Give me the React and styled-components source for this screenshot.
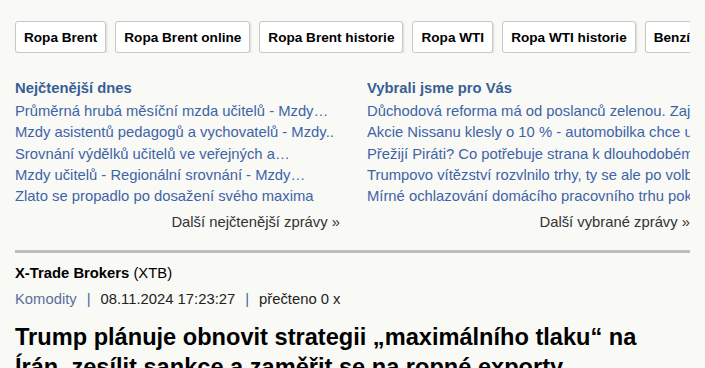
import React from "react";
import styled, { createGlobalStyle } from "styled-components";

const Global = createGlobalStyle`
  html, body { margin: 0; padding: 0; background: #f9f9f6; }
  body { font-family: "Liberation Sans", Arial, sans-serif; overflow: hidden; }
`;

const Page = styled.div`
  width: 675px;
  padding: 0 15px;
  overflow: hidden;
`;

const Toolbar = styled.div`
  display: flex;
  gap: 9px;
  padding-top: 21px;
  white-space: nowrap;
  overflow: hidden;
`;

const TagButton = styled.a`
  flex: none;
  display: flex;
  align-items: center;
  height: 30px;
  padding: 0 8px;
  background: #fff;
  border: 1px solid #c8c8c8;
  border-radius: 3px;
  box-shadow: 1px 1px 2px rgba(0,0,0,0.12);
  font-size: 13.6px;
  font-weight: bold;
  color: #000;
  text-decoration: none;
`;

const Columns = styled.div`
  display: grid;
  grid-template-columns: 325px 323px;
  column-gap: 27px;
  margin-top: 26px;
`;

const Column = styled.div`
  display: flex;
  flex-direction: column;
  overflow: hidden;
  min-width: 0;
`;

const Heading = styled.div`
  font-size: 14.8px;
  font-weight: bold;
  color: #385f94;
  line-height: 18px;
  margin-bottom: 4px;
`;

const NewsLink = styled.a`
  font-size: 14.8px;
  line-height: 21.3px;
  color: #3e64a6;
  text-decoration: none;
  white-space: nowrap;
  overflow: hidden;
`;

const More = styled.a`
  align-self: flex-end;
  font-size: 14.8px;
  line-height: 20px;
  color: #333;
  text-decoration: none;
  margin-top: 5px;
  white-space: nowrap;
`;

const Divider = styled.hr`
  border: 0;
  height: 3px;
  background: #bdbdbd;
  margin: 18px 0 0;
`;

const Source = styled.div`
  margin-top: 11px;
  font-size: 14.8px;
  line-height: 18px;
  color: #000;
  b { font-weight: bold; }
`;

const Meta = styled.div`
  margin-top: 8px;
  font-size: 14.8px;
  line-height: 18px;
  color: #222;
  display: flex;
  gap: 10px;
  white-space: nowrap;
`;

const MetaLink = styled.a`
  color: #5a6e9c;
  text-decoration: none;
`;

const Sep = styled.span`
  color: #3e64a6;
`;

const Title = styled.h1`
  margin: 14px 0 0;
  font-size: 23.6px;
  line-height: 30px;
  font-weight: bold;
  color: #000;
`;

const tags = ["Ropa Brent", "Ropa Brent online", "Ropa Brent historie", "Ropa WTI", "Ropa WTI historie", "Benzín", "Nafta"];

const mostRead = [
  "Průměrná hrubá měsíční mzda učitelů - Mzdy…",
  "Mzdy asistentů pedagogů a vychovatelů - Mzdy..",
  "Srovnání výdělků učitelů ve veřejných a…",
  "Mzdy učitelů - Regionální srovnání - Mzdy…",
  "Zlato se propadlo po dosažení svého maxima",
];

const picked = [
  "Důchodová reforma má od poslanců zelenou. Zajímá vás, co se změní?",
  "Akcie Nissanu klesly o 10 % - automobilka chce ušetřit",
  "Přežijí Piráti? Co potřebuje strana k dlouhodobému přežití",
  "Trumpovo vítězství rozvlnilo trhy, ty se ale po volbách uklidnily",
  "Mírné ochlazování domácího pracovního trhu pokračuje",
];

export default function App() {
  return (
    <>
      <Global />
      <Page>
        <Toolbar>
          {tags.map((t) => (
            <TagButton key={t} href="#">{t}</TagButton>
          ))}
        </Toolbar>
        <Columns>
          <Column>
            <Heading>Nejčtenější dnes</Heading>
            {mostRead.map((t) => <NewsLink key={t} href="#">{t}</NewsLink>)}
            <More href="#">Další nejčtenější zprávy »</More>
          </Column>
          <Column>
            <Heading>Vybrali jsme pro Vás</Heading>
            {picked.map((t) => <NewsLink key={t} href="#">{t}</NewsLink>)}
            <More href="#">Další vybrané zprávy »</More>
          </Column>
        </Columns>
        <Divider />
        <Source><b>X-Trade Brokers</b> (XTB)</Source>
        <Meta>
          <MetaLink href="#">Komodity</MetaLink>
          <Sep>|</Sep>
          <span>08.11.2024 17:23:27</span>
          <Sep>|</Sep>
          <span>přečteno 0 x</span>
        </Meta>
        <Title>Trump plánuje obnovit strategii „maximálního tlaku“ na Írán, zesílit sankce a zaměřit se na ropné exporty</Title>
      </Page>
    </>
  );
}
